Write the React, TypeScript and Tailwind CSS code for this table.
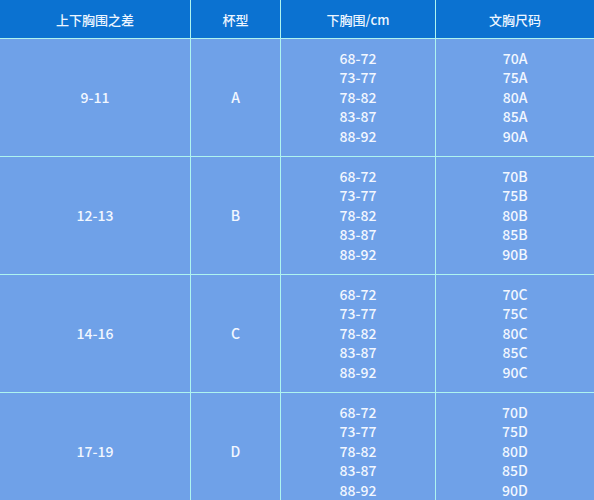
import React from "react";

const groups = [
  { diff: "9-11", cup: "A" },
  { diff: "12-13", cup: "B" },
  { diff: "14-16", cup: "C" },
  { diff: "17-19", cup: "D" },
];
const bands = ["68-72", "73-77", "78-82", "83-87", "88-92"];
const sizes = ["70", "75", "80", "85", "90"];

export default function App() {
  return (
    <div
      className="w-[594px] h-[500px] overflow-hidden bg-[#6fa1e8]"
      style={{ fontFamily: '"Noto Sans CJK SC", "Noto Sans", sans-serif' }}
    >
      <div className="grid grid-cols-[190px_89px_154px_158px] grid-rows-[38px_117px_117px_117px_117px] gap-px bg-[#aef4f0]">
        {["上下胸围之差", "杯型", "下胸围/cm", "文胸尺码"].map((h) => (
          <div
            key={h}
            className="bg-[#0b72d1] text-[#eef6ff] text-[13px] font-medium flex items-center justify-center pt-px"
          >
            {h}
          </div>
        ))}
        {groups.map((g) => (
          <React.Fragment key={g.cup}>
            <div className="bg-[#6fa1e8] text-[#f2f7ff] text-[14px] font-medium flex items-center justify-center">
              {g.diff}
            </div>
            <div className="bg-[#6fa1e8] text-[#f2f7ff] text-[14px] font-medium flex items-center justify-center">
              {g.cup}
            </div>
            <div className="bg-[#6fa1e8] text-[#f2f7ff] text-[14px] font-medium leading-[19.6px] flex flex-col items-center justify-center">
              {bands.map((b) => (
                <div key={b}>{b}</div>
              ))}
            </div>
            <div className="bg-[#6fa1e8] text-[#f2f7ff] text-[14px] font-medium leading-[19.6px] flex flex-col items-center justify-center">
              {sizes.map((s) => (
                <div key={s}>
                  {s}
                  {g.cup}
                </div>
              ))}
            </div>
          </React.Fragment>
        ))}
      </div>
    </div>
  );
}
